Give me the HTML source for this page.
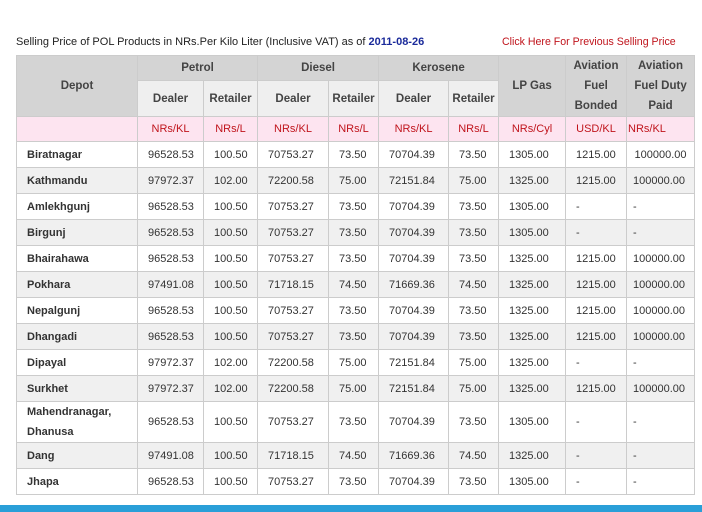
<!DOCTYPE html>
<html><head><style>
body{margin:0;width:702px;height:512px;background:#fff;font-family:"Liberation Sans",Arial,sans-serif;font-size:11px;color:#333;position:relative;overflow:hidden}
.t1{position:absolute;left:16px;top:36px;font-size:11px;color:#222}
.t1 b{color:#1a2a9a}
.t2{position:absolute;left:502px;top:36px;font-size:10.6px;color:#c0141c}
table{position:absolute;left:16px;top:55px;border-collapse:collapse;table-layout:fixed;width:678px}
td,th{border:1px solid #ccc;padding:0 0 0 10px;text-align:left;white-space:nowrap;overflow:hidden}
td{font-weight:normal}
td:last-child{padding-left:6px}
th{background:#d4d4d4;font-weight:bold;color:#444;text-align:center;padding:0;font-size:11.5px}
th.s{background:#efefef}
tr.p td{background:#fde4f0;color:#c0141c;text-align:center;padding:0}
td.d{font-weight:bold;color:#333}
tr.g td{background:#f0f0f0}
tr.r td{height:25px}
.bar{position:absolute;left:0;top:505px;width:702px;height:7px;background:#2a9fd8}
</style></head><body>
<div class="t1">Selling Price of POL Products in NRs.Per Kilo Liter (Inclusive VAT) as of <b>2011-08-26</b></div>
<div class="t2">Click Here For Previous Selling Price</div>
<table>
<colgroup><col style="width:121px"><col style="width:66px"><col style="width:54px"><col style="width:71px"><col style="width:50px"><col style="width:70px"><col style="width:50px"><col style="width:67px"><col style="width:61px"><col style="width:68px"></colgroup>
<tr style="height:25px"><th rowspan="2">Depot</th><th colspan="2">Petrol</th><th colspan="2">Diesel</th><th colspan="2">Kerosene</th><th rowspan="2">LP Gas</th><th rowspan="2" style="line-height:20px">Aviation<br>Fuel<br>Bonded</th><th rowspan="2" style="line-height:20px">Aviation<br>Fuel Duty<br>Paid</th></tr>
<tr style="height:35px"><th class="s">Dealer</th><th class="s">Retailer</th><th class="s">Dealer</th><th class="s">Retailer</th><th class="s">Dealer</th><th class="s">Retailer</th></tr>
<tr class="p" style="height:25px"><td></td><td>NRs/KL</td><td>NRs/L</td><td>NRs/KL</td><td>NRs/L</td><td>NRs/KL</td><td>NRs/L</td><td>NRs/Cyl</td><td>USD/KL</td><td style="text-align:left;padding-left:1px">NRs/KL</td></tr>
<tr class="r"><td class="d">Biratnagar</td><td>96528.53</td><td>100.50</td><td>70753.27</td><td>73.50</td><td>70704.39</td><td>73.50</td><td>1305.00</td><td>1215.00</td><td style="text-align:center;padding:0">100000.00</td></tr>
<tr class="r g"><td class="d">Kathmandu</td><td>97972.37</td><td>102.00</td><td>72200.58</td><td>75.00</td><td>72151.84</td><td>75.00</td><td>1325.00</td><td>1215.00</td><td>100000.00</td></tr>
<tr class="r"><td class="d">Amlekhgunj</td><td>96528.53</td><td>100.50</td><td>70753.27</td><td>73.50</td><td>70704.39</td><td>73.50</td><td>1305.00</td><td>-</td><td>-</td></tr>
<tr class="r g"><td class="d">Birgunj</td><td>96528.53</td><td>100.50</td><td>70753.27</td><td>73.50</td><td>70704.39</td><td>73.50</td><td>1305.00</td><td>-</td><td>-</td></tr>
<tr class="r"><td class="d">Bhairahawa</td><td>96528.53</td><td>100.50</td><td>70753.27</td><td>73.50</td><td>70704.39</td><td>73.50</td><td>1325.00</td><td>1215.00</td><td>100000.00</td></tr>
<tr class="r g"><td class="d">Pokhara</td><td>97491.08</td><td>100.50</td><td>71718.15</td><td>74.50</td><td>71669.36</td><td>74.50</td><td>1325.00</td><td>1215.00</td><td>100000.00</td></tr>
<tr class="r"><td class="d">Nepalgunj</td><td>96528.53</td><td>100.50</td><td>70753.27</td><td>73.50</td><td>70704.39</td><td>73.50</td><td>1325.00</td><td>1215.00</td><td>100000.00</td></tr>
<tr class="r g"><td class="d">Dhangadi</td><td>96528.53</td><td>100.50</td><td>70753.27</td><td>73.50</td><td>70704.39</td><td>73.50</td><td>1325.00</td><td>1215.00</td><td>100000.00</td></tr>
<tr class="r"><td class="d">Dipayal</td><td>97972.37</td><td>102.00</td><td>72200.58</td><td>75.00</td><td>72151.84</td><td>75.00</td><td>1325.00</td><td>-</td><td>-</td></tr>
<tr class="r g"><td class="d">Surkhet</td><td>97972.37</td><td>102.00</td><td>72200.58</td><td>75.00</td><td>72151.84</td><td>75.00</td><td>1325.00</td><td>1215.00</td><td>100000.00</td></tr>
<tr style="height:40px"><td class="d" style="line-height:20px">Mahendranagar,<br>Dhanusa</td><td>96528.53</td><td>100.50</td><td>70753.27</td><td>73.50</td><td>70704.39</td><td>73.50</td><td>1305.00</td><td>-</td><td>-</td></tr>
<tr class="r g"><td class="d">Dang</td><td>97491.08</td><td>100.50</td><td>71718.15</td><td>74.50</td><td>71669.36</td><td>74.50</td><td>1325.00</td><td>-</td><td>-</td></tr>
<tr class="r"><td class="d">Jhapa</td><td>96528.53</td><td>100.50</td><td>70753.27</td><td>73.50</td><td>70704.39</td><td>73.50</td><td>1305.00</td><td>-</td><td>-</td></tr>
</table>
<div class="bar"></div>
</body></html>
